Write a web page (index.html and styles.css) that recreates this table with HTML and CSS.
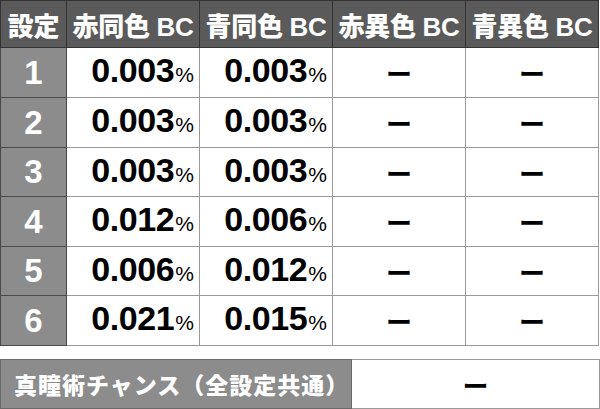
FILE: index.html
```html
<!DOCTYPE html>
<html lang="ja">
<head>
<meta charset="utf-8">
<link rel="stylesheet" href="styles.css">
</head>
<body>
<div class="page">
  <table class="rates">
    <colgroup>
      <col class="c-set"><col class="c-val"><col class="c-val"><col class="c-val"><col class="c-val">
    </colgroup>
    <thead>
      <tr class="head">
        <th>設定</th><th>赤同色 BC</th><th>青同色 BC</th><th>赤異色 BC</th><th>青異色 BC</th>
      </tr>
    </thead>
    <tbody>
      <tr class="r50"><th class="set">1</th><td class="num">0.003<span class="pct">%</span></td><td class="num">0.003<span class="pct">%</span></td><td class="dash">ー</td><td class="dash">ー</td></tr>
      <tr class="r50"><th class="set">2</th><td class="num">0.003<span class="pct">%</span></td><td class="num">0.003<span class="pct">%</span></td><td class="dash">ー</td><td class="dash">ー</td></tr>
      <tr class="r49"><th class="set">3</th><td class="num">0.003<span class="pct">%</span></td><td class="num">0.003<span class="pct">%</span></td><td class="dash">ー</td><td class="dash">ー</td></tr>
      <tr class="r50"><th class="set">4</th><td class="num">0.012<span class="pct">%</span></td><td class="num">0.006<span class="pct">%</span></td><td class="dash">ー</td><td class="dash">ー</td></tr>
      <tr class="r49"><th class="set">5</th><td class="num">0.006<span class="pct">%</span></td><td class="num">0.012<span class="pct">%</span></td><td class="dash">ー</td><td class="dash">ー</td></tr>
      <tr class="r50"><th class="set">6</th><td class="num">0.021<span class="pct">%</span></td><td class="num">0.015<span class="pct">%</span></td><td class="dash">ー</td><td class="dash">ー</td></tr>
    </tbody>
  </table>

  <table class="chance">
    <colgroup><col class="c-label"><col class="c-rest"></colgroup>
    <tr>
      <th class="label">真瞳術チャンス（全設定共通）</th>
      <td class="dash">ー</td>
    </tr>
  </table>
</div>
</body>
</html>
```

FILE: styles.css
```css
html, body {
  margin: 0;
  padding: 0;
  background: #ffffff;
}

.page {
  width: 600px;
  font-family: "Liberation Sans", "Noto Sans CJK JP", sans-serif;
}

table {
  border-collapse: collapse;
  table-layout: fixed;
  width: 599px;
}

.c-set { width: 66px; }
.c-val { width: 133px; }

.rates th,
.rates td {
  padding: 0;
  text-align: center;
  vertical-align: middle;
}

.head th {
  height: 46px;
  background: #5a5a5a;
  color: #ffffff;
  font-size: 26px;
  font-weight: 900;
  border: 1px solid #333333;
  white-space: nowrap;
  letter-spacing: -0.3px;
}

.r50 > * { height: 49px; }
.r49 > * { height: 48px; }

.set {
  background: #8c8c8c;
  color: #ffffff;
  font-size: 33px;
  font-weight: 700;
  border: 1px solid #4a4a4a;
}

.rates td {
  background: #ffffff;
  border: 1px solid #9a9a9a;
}

.rates .num {
  font-size: 34px;
  line-height: 34px;
  font-weight: 700;
  color: #000000;
  letter-spacing: -0.4px;
  white-space: nowrap;
  text-align: right;
  padding: 0 5px 0 0;
}

.pct {
  font-size: 21px;
  font-weight: 400;
  letter-spacing: 0;
  margin-left: 1px;
}

.dash {
  font-family: "Noto Sans CJK JP", sans-serif;
  font-size: 26px;
  font-weight: 700;
  color: #000000;
}

.chance {
  margin-top: 13px;
}

.c-label { width: 351px; }
.c-rest { width: 248px; }

.chance th,
.chance td {
  height: 48px;
  padding: 0;
  vertical-align: middle;
}

.chance .label {
  background: #8c8c8c;
  color: #ffffff;
  font-family: "Noto Sans CJK JP", sans-serif;
  font-size: 23px;
  font-weight: 900;
  text-align: left;
  padding-left: 13px;
  border: 1px solid #6a6a6a;
  white-space: nowrap;
  letter-spacing: 1px;
}

.chance td {
  background: #ffffff;
  border: 1px solid #9a9a9a;
  text-align: center;
}
```
